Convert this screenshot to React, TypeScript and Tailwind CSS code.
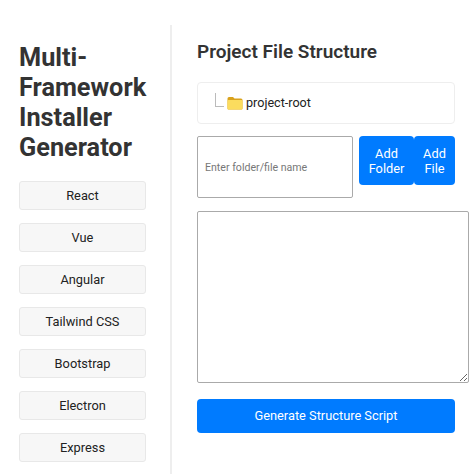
const frameworks = ['React', 'Vue', 'Angular', 'Tailwind CSS', 'Bootstrap', 'Electron', 'Express']

function FolderIcon() {
  return (
    <svg width="16" height="14" viewBox="0 0 16 14" className="shrink-0">
      <path d="M0.5 2.5Q0.5 1 2 1H6L7.5 2.5H14Q15.5 2.5 15.5 4V12.5Q15.5 13.5 14.500 13.5H1.500Q0.500 13.500 0.500 12.500Z" fill="#d9a21c" />
      <path d="M0.500 5Q0.500 4 1.500 4H14.500Q15.500 4 15.500 5V12.500Q15.500 13.500 14.500 13.500H1.500Q0.500 13.500 0.500 12.500Z" fill="#fbdc5e" />
    </svg>
  )
}

export default function App() {
  return (
    <div className="h-[474px] w-[474px] overflow-hidden bg-white pt-[25px] font-['Roboto',sans-serif] text-[#333]">
      <div className="flex h-[449px]">
        <aside className="h-full w-[172px] shrink-0 border-r-2 border-[#eeeeee] pl-[19px] pr-[25px] pt-[18px]">
          <h1 className="text-[25.3px] font-bold leading-[30px] text-[#333]">Multi-Framework Installer Generator</h1>
          <div className="mt-[18px] flex flex-col gap-[13px]">
            {frameworks.map((name) => (
              <button
                key={name}
                className="h-[29px] w-[127px] rounded-[3px] border border-[#e8e8e8] bg-[#f7f7f7] text-[12.8px] text-[#222]"
              >
                {name}
              </button>
            ))}
          </div>
        </aside>
        <main className="min-w-0 flex-1 pl-[25px] pt-[15px]">
          <h2 className="text-[19px] font-semibold leading-[24px] text-[#333]">Project File Structure</h2>
          <div className="mt-[18px] flex h-[42px] w-[258px] items-center rounded-[4px] border border-[#eeeeee] pl-[17px]">
            <span className="mb-[6px] mr-[3px] h-[14px] w-[9px] border-b border-l border-[#bbbbbb]" />
            <FolderIcon />
            <span className="ml-[3px] text-[12.6px] text-[#222]">project-root</span>
          </div>
          <div className="mt-[12px] flex w-[258px] items-start">
            <input
              placeholder="Enter folder/file name"
              className="h-[62px] w-[156px] rounded-[2px] border-[1.5px] border-[#aaaaaa] pl-[7px] text-[10.6px] placeholder:text-[#777]"
            />
            <button className="ml-[6px] h-[49px] w-[55px] rounded-[4px] bg-[#007bff] text-[12.8px] leading-[15px] text-white">
              Add Folder
            </button>
            <button className="h-[49px] w-[41px] rounded-[4px] bg-[#007bff] text-[12.8px] leading-[15px] text-white">
              Add File
            </button>
          </div>
          <textarea className="mt-[13px] block h-[172px] w-[272px] rounded-[2px] border-[1.5px] border-[#aaaaaa]" />
          <button className="mt-[16px] h-[34px] w-[258px] rounded-[4px] bg-[#007bff] text-[12.8px] text-white">
            Generate Structure Script
          </button>
        </main>
      </div>
    </div>
  )
}
